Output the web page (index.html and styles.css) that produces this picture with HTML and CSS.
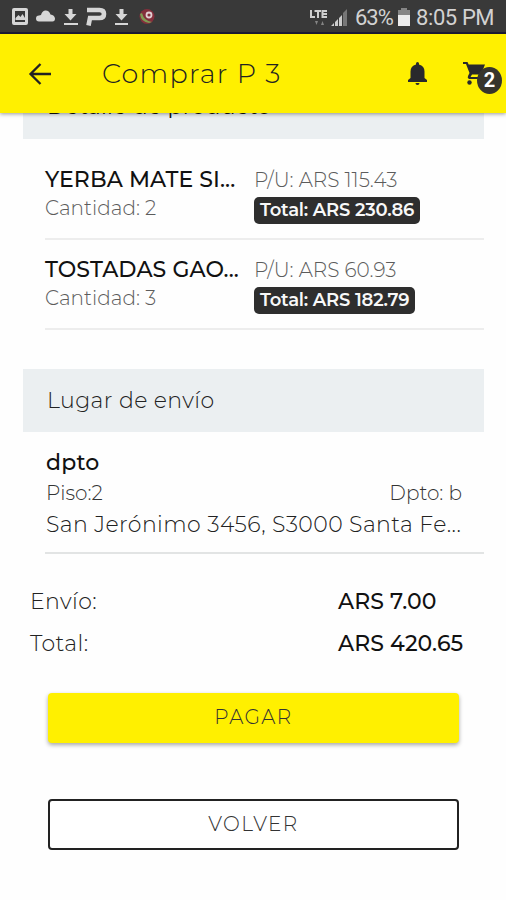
FILE: index.html
```html
<!DOCTYPE html>
<html lang="es">
<head>
<meta charset="utf-8">
<title>Comprar P 3</title>
<link rel="stylesheet" href="styles.css">
</head>
<body>
<div class="status">
  <svg class="status-icons" width="160" height="32" viewBox="0 0 160 32">
    <g fill="#d6d6d6">
      <path fill-rule="evenodd" d="M14 8h12q2 0 2 2v13q0 2-2 2H14q-2 0-2-2V10q0-2 2-2zm1 3v11h10V11z"/>
      <path d="M15.500 18l3-3 2 2 2-3 2.500 4v2h-9.500z"/>
      <path d="M39 21.500a3 3 0 0 1 0-6l2-.5q1-4 4-4.500 4-.5 5.500 4 4 .5 4.500 4 0 3-2.500 3z"/>
      <path d="M68.500 9h4v5h4l-6 6.500-6-6.500h4zM64 23h14v2H64zM119.500 9h4v5h4l-6 6.500-6-6.500h4zM115 23h13v2h-13z"/>
    </g>
    <path d="M87 10h12.500q4.500 0 4.500 4t-4.500 4H90l-1.500 7.500" fill="none" stroke="#d6d6d6" stroke-width="4.600"/>
    <circle cx="147" cy="16.500" r="7.500" fill="#842f3c"/>
    <path d="M140 14q1 8 9 9l3-1q-8-1-10-9z" fill="#7f9c54"/>
    <circle cx="149" cy="15" r="2.500" fill="none" stroke="#e2cfd3" stroke-width="1.800"/>
  </svg>
  <div class="status-right">
    <svg width="40" height="32" viewBox="0 0 40 32">
      <path d="M2 9v7h4M5.500 10h6.500M9 10v7M18 10h-4.500v6H18M13.500 13H18" fill="none" stroke="#d0d0d0" stroke-width="2"/>
      <path d="M6 20h3l-1.500 4zM12 24h3l-1.500-4z" fill="#858585"/>
      <path d="M22 25h3v-3zM26 25h3v-7l-3 3zM30 25h3v-11l-3 3z" fill="#ccc"/><path d="M34 25h4V8l-4 4z" fill="#777"/>
    </svg>
    <span class="percent">63%</span>
    <svg class="battery" width="12" height="18" viewBox="0 0 12 18"><path d="M3 0h6v2h3v16H0V2h3z" fill="#858585"/><path d="M0 7h12v11H0z" fill="#ececec"/></svg>
    <span class="clock">8:05 PM</span>
  </div>
</div>
<header class="bar">
  <svg class="back" width="24" height="24" viewBox="0 0 24 24"><path d="M23 12H2.500M12.500 2L2.500 12l10 10" fill="none" stroke="#222" stroke-width="2.300"/></svg>
  <h1 class="title">Comprar P 3</h1>
  <svg class="bell" width="20" height="24" viewBox="0 0 20 24"><path d="M9.500 0q1.500 0 1.500 1.500v1q5.500 1.500 5.500 7V16l2.500 2v2H0v-2l2.500-2V9.500q0-5.500 5.500-7v-1Q8 0 9.500 0zM7.500 21h4q0 2-2 2t-2-2z" fill="#29292c"/></svg>
  <div class="cart">
    <svg width="26" height="26" viewBox="0 0 26 26"><path d="M0 1h4.500l1.200 2.500H22l-4 10H9l-1.500 2.500H21v2H6q-2-1-1-3l1.500-3L3 3H0z" fill="#29292c"/><circle cx="6.500" cy="21.500" r="2.200" fill="#29292c"/><circle cx="18" cy="21.500" r="2.200" fill="#29292c"/></svg>
    <span class="count">2</span>
  </div>
</header>
<main class="content">
  <h2 class="band band-detail">Detalle de producto</h2>
  <section class="items">
    <div class="item">
      <div class="product"><div class="name">YERBA MATE SI...</div><div class="qty">Cantidad: 2</div></div>
      <div class="price"><div class="unit">P/U: ARS 115.43</div><span class="sum">Total: ARS 230.86</span></div>
    </div>
    <div class="item">
      <div class="product"><div class="name">TOSTADAS GAO...</div><div class="qty">Cantidad: 3</div></div>
      <div class="price"><div class="unit">P/U: ARS 60.93</div><span class="sum sum-short">Total: ARS 182.79</span></div>
    </div>
  </section>
  <h2 class="band">Lugar de envío</h2>
  <section class="address">
    <div class="place">dpto</div>
    <div class="unit-row"><span>Piso:2</span><span>Dpto: b</span></div>
    <div class="street">San Jerónimo 3456, S3000 Santa Fe...</div>
  </section>
  <section class="totals">
    <span class="label">Envío:</span><span class="amount">ARS 7.00</span>
    <span class="label">Total:</span><span class="amount">ARS 420.65</span>
  </section>
  <button class="btn pay">PAGAR</button>
  <button class="btn return">VOLVER</button>
</main>
</body>
</html>
```
FILE: styles.css
```css
* { box-sizing: border-box; }
body { margin: 0; width: 506px; height: 900px; overflow: hidden; display: flex; flex-direction: column; background: #fefefe; font-family: Montserrat, Inter, sans-serif; font-weight: 300; color: #222; white-space: nowrap; }
h1, h2 { margin: 0; font-weight: 300; }
svg { display: block; flex: none; }
.status { flex: none; height: 34px; background: #393939; border-bottom: 2px solid #1d1d35; display: flex; justify-content: space-between; font-family: Roboto, sans-serif; font-weight: 400; color: #d2d2d2; }
.status-right { display: flex; align-items: center; height: 34px; padding-right: 12px; font-size: 22px; }
.status-right > svg:first-child { margin-left: -2px; }
.percent { margin-left: 6px; width: 43px; letter-spacing: -1px; }
.battery { margin-right: 6px; }
.clock { width: 78px; letter-spacing: -0.4px; }
.bar { flex: none; height: 79px; background: #fff000; display: flex; align-items: center; position: relative; z-index: 1; box-shadow: 0 1px 4px rgba(0,0,0,.4); padding-left: 28px; }
.title { margin-left: 50px; width: 306px; font-size: 27px; line-height: 36px; letter-spacing: 1.2px; }
.cart { position: relative; margin-left: 35px; }
.count { position: absolute; left: 14px; top: 6px; width: 25px; height: 27px; border-radius: 50%; background: #37352c; color: #fff; font: 700 20px/27px Roboto, sans-serif; text-align: center; }
.content { flex: 1; min-height: 0; overflow: hidden; }
.band { height: 63px; margin: 0 22px 0 23px; padding-left: 24px; background: #ebeff1; font-size: 22px; line-height: 63px; letter-spacing: .4px; }
.band-detail { margin-top: -37px; line-height: 61px; color: #111; font-weight: 400; letter-spacing: .25px; }
.items { padding: 11px 22px 0 45px; height: 230px; }
.item { height: 90px; padding-top: 16px; border-bottom: 2px solid #ededed; display: flex; }
.product { width: 209px; }
.name { font-size: 22px; line-height: 28px; font-weight: 500; letter-spacing: .1px; color: #111; }
.qty, .unit { font-size: 20px; line-height: 28px; color: #5c5c5c; }
.unit { height: 31px; }
.sum { display: block; width: 166px; height: 27px; padding-left: 6px; border-radius: 5px; background: #2e2e2e; color: #f8f8f8; font-size: 18px; font-weight: 600; letter-spacing: -.2px; line-height: 26px; }
.sum-short { width: 161px; }
.address { height: 122px; margin: 0 22px 0 45px; padding: 15px 22px 0 1px; border-bottom: 2px solid #e2e4e4; }
.place { font-size: 22px; line-height: 31px; font-weight: 500; letter-spacing: .2px; color: #111; }
.unit-row { display: flex; justify-content: space-between; font-size: 20px; line-height: 31px; color: #333; }
.street { font-size: 22px; line-height: 31px; letter-spacing: .41px; }
.totals { height: 139px; padding: 27px 0 0 30px; display: grid; grid-template-columns: 308px 1fr; grid-auto-rows: 42px; line-height: 42px; font-size: 22px; }
.label { letter-spacing: .4px; }
.amount { font-weight: 500; letter-spacing: .1px; color: #111; }
.btn { display: block; width: 411px; margin-left: 48px; padding: 0 0 2px; border-radius: 4px; font: inherit; font-size: 20px; letter-spacing: 1.4px; color: #333; text-align: center; }
.pay { height: 50px; border: 0; background: #fff000; box-shadow: 0 2px 4px rgba(0,0,0,.35); }
.return { height: 51px; margin-top: 56px; border: 2px solid #222; background: #fff; }
```
